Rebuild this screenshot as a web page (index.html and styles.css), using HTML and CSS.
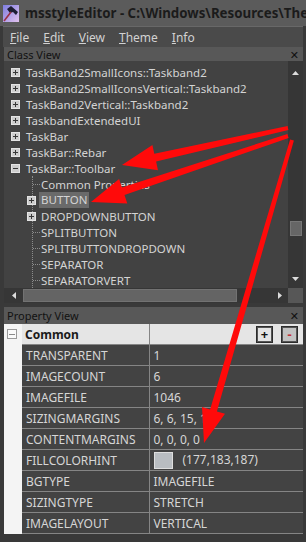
FILE: index.html
```html
<!DOCTYPE html>
<html lang="en">
<head>
    <meta charset="UTF-8">
    <meta name="viewport" content="width=device-width, initial-scale=1.0">
    <title>msstyleEditor</title>
    <link rel="stylesheet" href="styles.css">
</head>
<body>
    <div class="titlebar">
        <svg class="appicon" width="18" height="18" viewBox="0 0 18 18">
            <defs>
                <linearGradient id="ig" x1="0" y1="0" x2="1" y2="1">
                    <stop offset="0" stop-color="#7d7de0"/>
                    <stop offset="1" stop-color="#e2c2ee"/>
                </linearGradient>
            </defs>
            <rect x="1" y="1" width="16" height="17" fill="url(#ig)"/>
            <path d="M5 5 L9 2 L16 8 L14 11 L11 8 L8 9 Z" fill="#1d1d33"/>
            <path d="M9 8 L2 17" stroke="#9a3048" stroke-width="1.6"/>
        </svg>
        <span class="title">msstyleEditor - C:\Windows\Resources\Themes</span>
    </div>
    <div class="client">
        <div class="menubar">
            <span class="menu"><u>F</u>ile</span>
            <span class="menu"><u>E</u>dit</span>
            <span class="menu"><u>V</u>iew</span>
            <span class="menu"><u>T</u>heme</span>
            <span class="menu"><u>I</u>nfo</span>
        </div>

        <div class="panel-head">Class View <span class="close">✕</span></div>
        <div class="treebox">
            <div class="tree">
                <div class="row"><i class="exp plus"></i>TaskBand2SmallIcons::Taskband2</div>
                <div class="row"><i class="exp plus"></i>TaskBand2SmallIconsVertical::Taskband2</div>
                <div class="row"><i class="exp plus"></i>TaskBand2Vertical::Taskband2</div>
                <div class="row"><i class="exp plus"></i>TaskbandExtendedUI</div>
                <div class="row"><i class="exp plus"></i>TaskBar</div>
                <div class="row"><i class="exp plus"></i>TaskBar::Rebar</div>
                <div class="row"><i class="exp"></i>TaskBar::Toolbar</div>
                <div class="children">
                    <div class="child"><i class="dash"></i>Common Properties</div>
                    <div class="child"><i class="exp plus"></i><span class="sel">BUTTON</span></div>
                    <div class="child"><i class="exp plus"></i>DROPDOWNBUTTON</div>
                    <div class="child"><i class="dash"></i>SPLITBUTTON</div>
                    <div class="child"><i class="dash"></i>SPLITBUTTONDROPDOWN</div>
                    <div class="child"><i class="dash"></i>SEPARATOR</div>
                    <div class="child"><i class="dash"></i>SEPARATORVERT</div>
                </div>
            </div>
            <div class="vscroll">
                <svg class="up" width="7" height="4" viewBox="0 0 7 4"><path d="M0 4 L3.5 0 L7 4 Z" fill="#dcdcdc"/></svg>
                <div class="vthumb"></div>
                <svg class="down" width="7" height="4" viewBox="0 0 7 4"><path d="M0 0 L3.5 4 L7 0 Z" fill="#dcdcdc"/></svg>
            </div>
            <div class="hscroll">
                <div class="harrow">
                    <svg width="4" height="7" viewBox="0 0 4 7"><path d="M4 0 L0 3.5 L4 7 Z" fill="#dcdcdc"/></svg>
                </div>
                <div class="hthumb"></div>
                <div class="htrack">
                    <svg width="4" height="7" viewBox="0 0 4 7"><path d="M0 0 L4 3.5 L0 7 Z" fill="#dcdcdc"/></svg>
                </div>
            </div>
            <div class="corner"></div>
        </div>

        <div class="panel-head prop-head">Property View <span class="close">✕</span></div>
        <table class="grid">
            <colgroup>
                <col class="c-m">
                <col class="c-n">
                <col>
            </colgroup>
            <tr class="cat">
                <td class="m"><i class="collapse"></i></td>
                <td class="n">Common</td>
                <td class="v">
                    <div class="tools">
                        <span class="pbtn">+</span>
                        <span class="pbtn minus">-</span>
                    </div>
                </td>
            </tr>
            <tr><td class="m"></td><td class="n">TRANSPARENT</td><td class="v">1</td></tr>
            <tr><td class="m"></td><td class="n">IMAGECOUNT</td><td class="v">6</td></tr>
            <tr><td class="m"></td><td class="n">IMAGEFILE</td><td class="v">1046</td></tr>
            <tr><td class="m"></td><td class="n">SIZINGMARGINS</td><td class="v">6, 6, 15, 15</td></tr>
            <tr><td class="m"></td><td class="n">CONTENTMARGINS</td><td class="v">0, 0, 0, 0</td></tr>
            <tr><td class="m"></td><td class="n">FILLCOLORHINT</td><td class="v"><span class="swatch"></span>(177,183,187)</td></tr>
            <tr><td class="m"></td><td class="n">BGTYPE</td><td class="v">IMAGEFILE</td></tr>
            <tr><td class="m"></td><td class="n">SIZINGTYPE</td><td class="v">STRETCH</td></tr>
            <tr><td class="m"></td><td class="n">IMAGELAYOUT</td><td class="v">VERTICAL</td></tr>
        </table>
    </div>

    <!-- red annotation arrows drawn over the screenshot -->
    <svg class="arrows" width="306" height="542" viewBox="0 0 306 542">
        <polygon points="287.6,126 154.3,153.7 152.4,144.9 122,165 158,170.3 156.1,161.5 288.4,130"/>
        <polygon points="287.4,134.1 121.9,187.4 119.1,178.9 91,202 127.3,203.5 124.5,195 288.6,137.9"/>
        <polygon points="290.1,139.4 210.1,409.4 202,407.1 204,443 225,413.7 216.9,411.4 293.9,140.6"/>
    </svg>
</body>
</html>
```

FILE: styles.css
```css
body {
    margin: 0;
    width: 306px;
    height: 542px;
    overflow: hidden;
    position: relative;
    background: #393939;
    font-family: "Noto Sans", "DejaVu Sans", sans-serif;
    color: #d6d6d6;
}

.titlebar {
    height: 26px;
    background: #5b5b5b;
    display: flex;
    align-items: center;
    gap: 5px;
    padding-left: 2px;
    white-space: nowrap;
    overflow: hidden;
}
.appicon {
    flex: none;
}
.title {
    font-size: 13.3px;
    font-weight: bold;
    color: #1b1b1b;
}

.client {
    padding: 0 3px 0 4px;
}

.menubar {
    height: 20px;
    margin-left: -1px;
    border-top: 1px solid #686868;
    background: #4a4a4a;
    display: flex;
    align-items: center;
    font-size: 12px;
    color: #d2d2d2;
}
.menu {
    padding: 0 7px;
}

.panel-head {
    height: 14px;
    display: flex;
    justify-content: space-between;
    align-items: center;
    padding: 0 4px 0 3px;
    background: #585858;
    color: #121212;
    font-size: 11px;
}
.prop-head {
    height: 17px;
    margin-top: 4px;
}
.close {
    font-size: 11px;
    color: #111;
}

/* class tree */
.treebox {
    display: grid;
    grid-template-columns: 1fr 15px;
    grid-template-rows: 227px 15px;
    background: #424242;
}
.tree {
    overflow: hidden;
    padding-top: 3px;
    font-size: 11.5px;
    color: #d4d4d4;
}
.row {
    height: 16px;
    display: flex;
    align-items: center;
    white-space: nowrap;
    padding-left: 7px;
}
.exp {
    flex: none;
    width: 9px;
    height: 9px;
    box-sizing: border-box;
    border: 1px solid #e4e4e4;
    margin-right: 6px;
    background: linear-gradient(#383838, #383838) center / 5px 1px no-repeat, #cdcdcd;
}
.exp.plus {
    background: linear-gradient(#383838, #383838) center / 5px 1px no-repeat,
                linear-gradient(#383838, #383838) center / 1px 5px no-repeat, #cdcdcd;
}
.children {
    margin-left: 28px;
    border-left: 1px dotted #8c8c8c;
}
.child {
    height: 16px;
    display: flex;
    align-items: center;
    white-space: nowrap;
}
.child .exp {
    margin-left: -6px;
    margin-right: 5px;
}
.dash {
    flex: none;
    width: 7px;
    border-top: 1px dotted #8c8c8c;
    margin-right: 1px;
}
.sel {
    background: #6a6a6a;
    line-height: 16px;
    padding: 0 2px;
    margin-left: -2px;
}

.vscroll {
    background: #363636;
}
.vscroll svg {
    display: block;
    margin-left: 4px;
}
.vscroll .up {
    margin-top: 10px;
}
.vthumb {
    width: 12px;
    height: 15px;
    margin: 146px 0 0 2px;
    background: #666;
    border: 1px solid #777;
    box-sizing: border-box;
}
.vscroll .down {
    margin-top: 41px;
}

.hscroll {
    display: flex;
    align-items: center;
    background: #363636;
}
.harrow {
    width: 19px;
    display: flex;
    justify-content: center;
}
.harrow svg, .htrack svg {
    display: block;
}
.hthumb {
    width: 214px;
    height: 13px;
    background: #646464;
    border: 1px solid #727272;
    box-sizing: border-box;
}
.htrack {
    flex: 1;
    display: flex;
    justify-content: flex-end;
    padding-right: 6px;
}
.corner {
    background: #575757;
}

/* property grid */
.grid {
    width: 100%;
    border-collapse: collapse;
    table-layout: fixed;
    font-size: 12px;
    color: #d6d6d6;
}
.c-m {
    width: 18px;
}
.c-n {
    width: 127px;
}
.grid td {
    height: 20px;
    padding: 0 0 0 4px;
    border-bottom: 1px solid #858585;
    background: #434343;
    white-space: nowrap;
    overflow: hidden;
}
.grid td.m {
    padding: 0;
    background: #f4f4f4;
    border-bottom: none;
}
.grid td.n {
    border-right: 1px solid #858585;
}
.grid .cat td {
    background: #e5e5e5;
    color: #1a1a1a;
}
.grid .cat td.m {
    background: #f4f4f4;
}
.grid .cat td.n {
    font-weight: bold;
    padding-left: 3px;
}
.collapse {
    display: block;
    width: 10px;
    height: 10px;
    margin-left: 3px;
    box-sizing: border-box;
    border: 1px solid #9a9a9a;
    background: linear-gradient(#8a8a8a, #8a8a8a) center / 6px 1px no-repeat, #fafafa;
}
.tools {
    display: flex;
    justify-content: flex-end;
    gap: 8px;
    padding-right: 5px;
}
.pbtn {
    width: 17px;
    height: 17px;
    box-sizing: border-box;
    border: 2px solid #555;
    outline: 1px solid #2c2c2c;
    outline-offset: -1px;
    background: #e4e4e4;
    color: #111;
    font-size: 13px;
    line-height: 12px;
    text-align: center;
    font-weight: bold;
}
.pbtn.minus {
    background: #c2c2c2;
    color: #c2303a;
}
.swatch {
    display: inline-block;
    width: 19px;
    height: 17px;
    box-sizing: border-box;
    border: 1px solid #dedede;
    background: #b9bdc1;
    vertical-align: middle;
    margin-right: 10px;
}

.arrows {
    position: absolute;
    top: 0;
    left: 0;
    pointer-events: none;
    fill: #ff0a0a;
}
```
